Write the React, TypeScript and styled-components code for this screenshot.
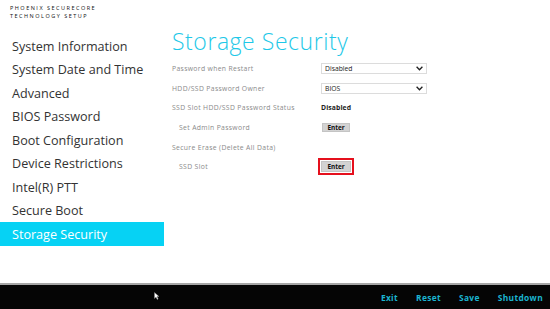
import React from "react";
import styled, { createGlobalStyle } from "styled-components";

const Global = createGlobalStyle`
  html, body { margin: 0; padding: 0; background: #fff; }
  body { font-family: "Open Sans", "Noto Sans", "DejaVu Sans", sans-serif; }
  * { box-sizing: border-box; }
`;

const Screen = styled.div`
  width: 550px;
  height: 309px;
  display: flex;
  flex-direction: column;
  overflow: hidden;
  background: #fff;
`;

const Main = styled.div`
  flex: 1;
  display: flex;
  min-height: 0;
`;

const Sidebar = styled.div`
  width: 164px;
  display: flex;
  flex-direction: column;
`;

const Brand = styled.div`
  padding: 5px 0 0 10px;
  height: 34.25px;
  display: flex;
  flex-direction: column;
`;

const BrandLine = styled.span`
  display: block;
  font-size: 5.5px;
  line-height: 7.5px;
  color: #111;
  letter-spacing: 1.5px;
  text-transform: uppercase;
  white-space: nowrap;
`;

const Nav = styled.div`
  display: flex;
  flex-direction: column;
`;

const NavItem = styled.div<{ $active?: boolean }>`
  height: 23.5px;
  display: flex;
  align-items: center;
  padding-left: 12px;
  font-size: 12.6px;
  color: ${(p) => (p.$active ? "#fff" : "#333")};
  background: ${(p) => (p.$active ? "#06d2f4" : "transparent")};
  white-space: nowrap;
`;

const Content = styled.div`
  flex: 1;
  padding-left: 8px;
  display: flex;
  flex-direction: column;
`;

const Title = styled.h1`
  margin: 0;
  padding-top: 27px;
  height: 59px;
  font-size: 23px;
  font-weight: 300;
  line-height: 28px;
  color: #1ec8e8;
  letter-spacing: 0.55px;
`;

const Row = styled.div`
  height: 19.6px;
  display: flex;
  align-items: center;
`;

const Label = styled.div<{ $indent?: boolean }>`
  width: 149px;
  padding-left: ${(p) => (p.$indent ? "7px" : "0")};
  font-size: 6.8px;
  letter-spacing: 0.35px;
  color: #8a8a8a;
  white-space: nowrap;
`;

const Select = styled.div`
  width: 106px;
  height: 11px;
  border: 1px solid #dcdcdc;
  display: flex;
  align-items: center;
  justify-content: space-between;
  padding: 0 3px 0 3px;
  font-size: 6.8px;
  color: #222;
`;

const Value = styled.div`
  font-size: 6.8px;
  font-weight: 700;
  letter-spacing: 0.1px;
  color: #222;
`;

const EnterButton = styled.div<{ $marked?: boolean }>`
  margin-left: ${(p) => (p.$marked ? "0" : "1px")};
  width: ${(p) => (p.$marked ? "30px" : "28px")};
  height: ${(p) => (p.$marked ? "11px" : "9.5px")};
  background: #d3d3d3;
  border: 1px solid #c4c4c4;
  display: flex;
  align-items: center;
  justify-content: center;
  font-size: 6.4px;
  font-weight: 700;
  color: #111;
  outline: ${(p) => (p.$marked ? "2.5px solid #e5101d" : "none")};
  outline-offset: 1.2px;
`;

const Footer = styled.div`
  position: relative;
  height: 26px;
  background: #050505;
  border-top: 2px solid #a6a6a6;
  display: flex;
  align-items: center;
  justify-content: flex-end;
  gap: 18px;
  padding-right: 7px;
`;

const FooterLink = styled.span`
  font-size: 8.4px;
  font-weight: 700;
  letter-spacing: 0.35px;
  color: #1bb4d0;
`;

const Cursor = styled.svg`
  position: absolute;
  left: 154px;
  top: 7px;
`;

const Chevron = () => (
  <svg width="7" height="5" viewBox="0 0 7 5">
    <path d="M0.6 0.8 L3.5 3.8 L6.4 0.8" fill="none" stroke="#222" strokeWidth="1.3" />
  </svg>
);

const navItems = [
  "System Information",
  "System Date and Time",
  "Advanced",
  "BIOS Password",
  "Boot Configuration",
  "Device Restrictions",
  "Intel(R) PTT",
  "Secure Boot",
  "Storage Security",
];

export default function App() {
  return (
    <Screen>
      <Global />
      <Main>
        <Sidebar>
          <Brand>
            <BrandLine>Phoenix SecureCore</BrandLine>
            <BrandLine>Technology Setup</BrandLine>
          </Brand>
          <Nav>
            {navItems.map((n) => (
              <NavItem key={n} $active={n === "Storage Security"}>
                {n}
              </NavItem>
            ))}
          </Nav>
        </Sidebar>
        <Content>
          <Title>Storage Security</Title>
          <Row>
            <Label>Password when Restart</Label>
            <Select>
              <span>Disabled</span>
              <Chevron />
            </Select>
          </Row>
          <Row>
            <Label>HDD/SSD Password Owner</Label>
            <Select>
              <span>BIOS</span>
              <Chevron />
            </Select>
          </Row>
          <Row>
            <Label>SSD Slot HDD/SSD Password Status</Label>
            <Value>Disabled</Value>
          </Row>
          <Row>
            <Label $indent>Set Admin Password</Label>
            <EnterButton>Enter</EnterButton>
          </Row>
          <Row>
            <Label>Secure Erase (Delete All Data)</Label>
          </Row>
          <Row>
            <Label $indent>SSD Slot</Label>
            <EnterButton $marked>Enter</EnterButton>
          </Row>
        </Content>
      </Main>
      <Footer>
        <Cursor width="6" height="8" viewBox="0 0 6 8">
          <path d="M0.5 0.5 L0.5 6.5 L2 5 L3.2 7.5 L4.2 7 L3 4.6 L5 4.6 Z" fill="#fff" stroke="#888" strokeWidth="0.4" />
        </Cursor>
        <FooterLink>Exit</FooterLink>
        <FooterLink>Reset</FooterLink>
        <FooterLink>Save</FooterLink>
        <FooterLink>Shutdown</FooterLink>
      </Footer>
    </Screen>
  );
}
